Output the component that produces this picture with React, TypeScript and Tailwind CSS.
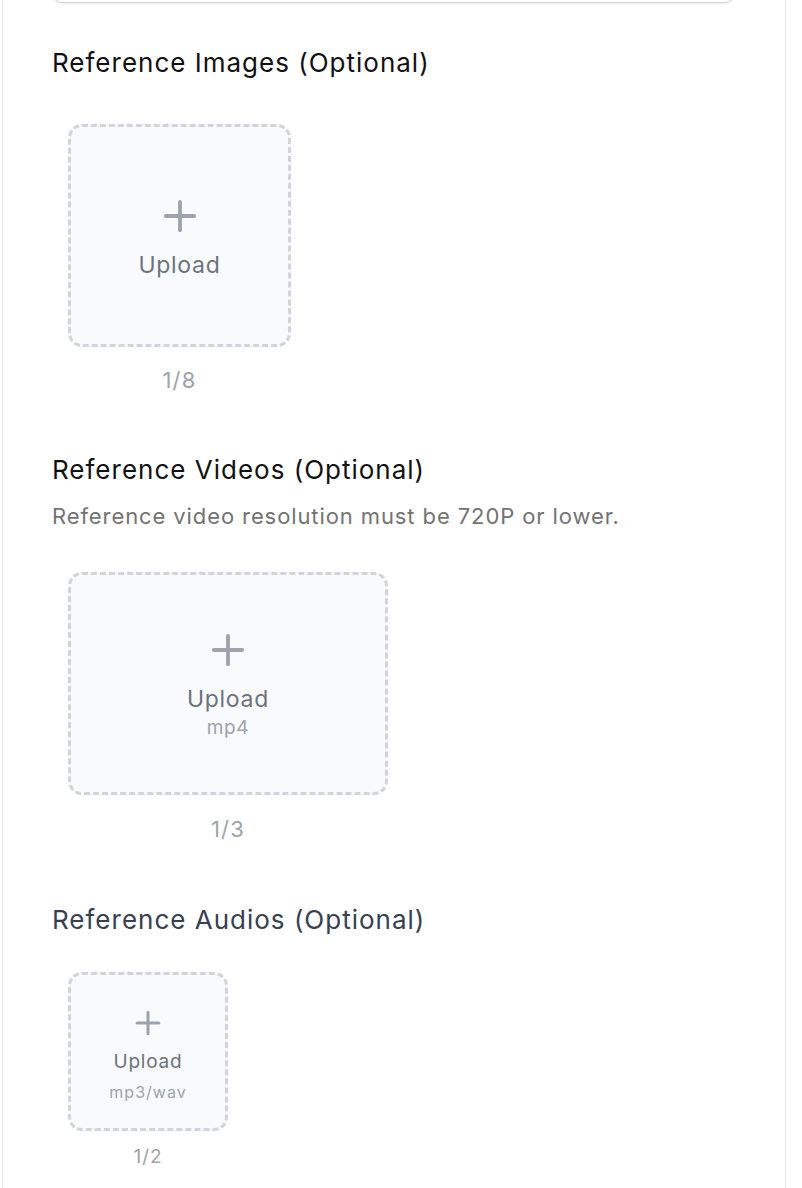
import React from 'react';

type UploadBoxProps = {
  className: string;
  iconSize: number;
  iconStroke: number;
  labelClass: string;
  hint?: string;
  hintClass?: string;
  count: string;
  countClass: string;
};

const PlusIcon = ({ size, stroke }: { size: number; stroke: number }) => (
  <svg width={size} height={size} viewBox="0 0 24 24" fill="none" stroke="#9ca3af" strokeWidth={stroke} strokeLinecap="round">
    <path d="M12 2v20M2 12h20" />
  </svg>
);

const UploadBox = ({ className, iconSize, iconStroke, labelClass, hint, hintClass, count, countClass }: UploadBoxProps) => (
  <div className="flex w-fit flex-col">
    <div className={`flex flex-col items-center justify-center rounded-[14px] border-[3px] border-dashed border-[#d1d5db] bg-[#f9fafb] ${className}`}>
      <PlusIcon size={iconSize} stroke={iconStroke} />
      <span className={`text-[#6b7280] ${labelClass}`}>Upload</span>
      {hint && <span className={`text-[#9ca3af] ${hintClass}`}>{hint}</span>}
    </div>
    <div className={`text-center text-[#9ca3af] ${countClass}`}>{count}</div>
  </div>
);

const App = () => {
  return (
    <div className="min-h-screen overflow-hidden bg-white" style={{ fontFamily: 'Inter, "Noto Sans", sans-serif' }}>
      <div className="ml-[2px] min-h-[1188px] w-[784px] border-x border-[#e5e7eb] pb-10 pl-[49px] pr-[50px]">
        {/* bottom edge of the field above, scrolled mostly out of view */}
        <div className="-mt-[47px] h-[50px] rounded-[10px] border border-[#d4d4d8] bg-white shadow-[0_1px_2px_rgba(0,0,0,0.08)]" />

        <h2 className="mt-[44px] text-[26px] leading-[32px] tracking-[1px] text-[#111111]">Reference Images (Optional)</h2>
        <div className="ml-[16px] mt-[45px]">
          <UploadBox
            className="h-[223px] w-[223px] pt-[7px]"
            iconSize={34}
            iconStroke={2.7}
            labelClass="mt-[18px] text-[23px] leading-[28px] tracking-[0.7px]"
            count="1/8"
            countClass="mt-[19px] text-[22px] leading-[28px] tracking-[1.2px]"
          />
        </div>

        <h2 className="mt-[60px] text-[26px] leading-[32px] tracking-[1px] text-[#111111]">Reference Videos (Optional)</h2>
        <p className="mt-[16px] text-[22px] leading-[28px] tracking-[0.9px] text-[#737373]">Reference video resolution must be 720P or lower.</p>
        <div className="ml-[16px] mt-[42px]">
          <UploadBox
            className="h-[223px] w-[320px] pt-[6px]"
            iconSize={34}
            iconStroke={2.7}
            labelClass="mt-[18px] text-[23px] leading-[28px] tracking-[0.7px]"
            hint="mp4"
            hintClass="mt-[3px] text-[19px] leading-[24px] tracking-[0.7px]"
            count="1/3"
            countClass="mt-[20px] text-[22px] leading-[28px] tracking-[1.2px]"
          />
        </div>

        <h2 className="mt-[61px] text-[26px] leading-[32px] tracking-[1px] text-[#374151]">Reference Audios (Optional)</h2>
        <div className="ml-[16px] mt-[36px]">
          <UploadBox
            className="h-[159px] w-[160px] pt-[8px]"
            iconSize={26}
            iconStroke={2.8}
            labelClass="mt-[14px] text-[19px] leading-[24px] tracking-[0.8px]"
            hint="mp3/wav"
            hintClass="mt-[8px] text-[16px] leading-[20px] tracking-[1px]"
            count="1/2"
            countClass="mt-[14px] text-[19px] leading-[24px] tracking-[1px]"
          />
        </div>
      </div>
    </div>
  );
};

export default App;
